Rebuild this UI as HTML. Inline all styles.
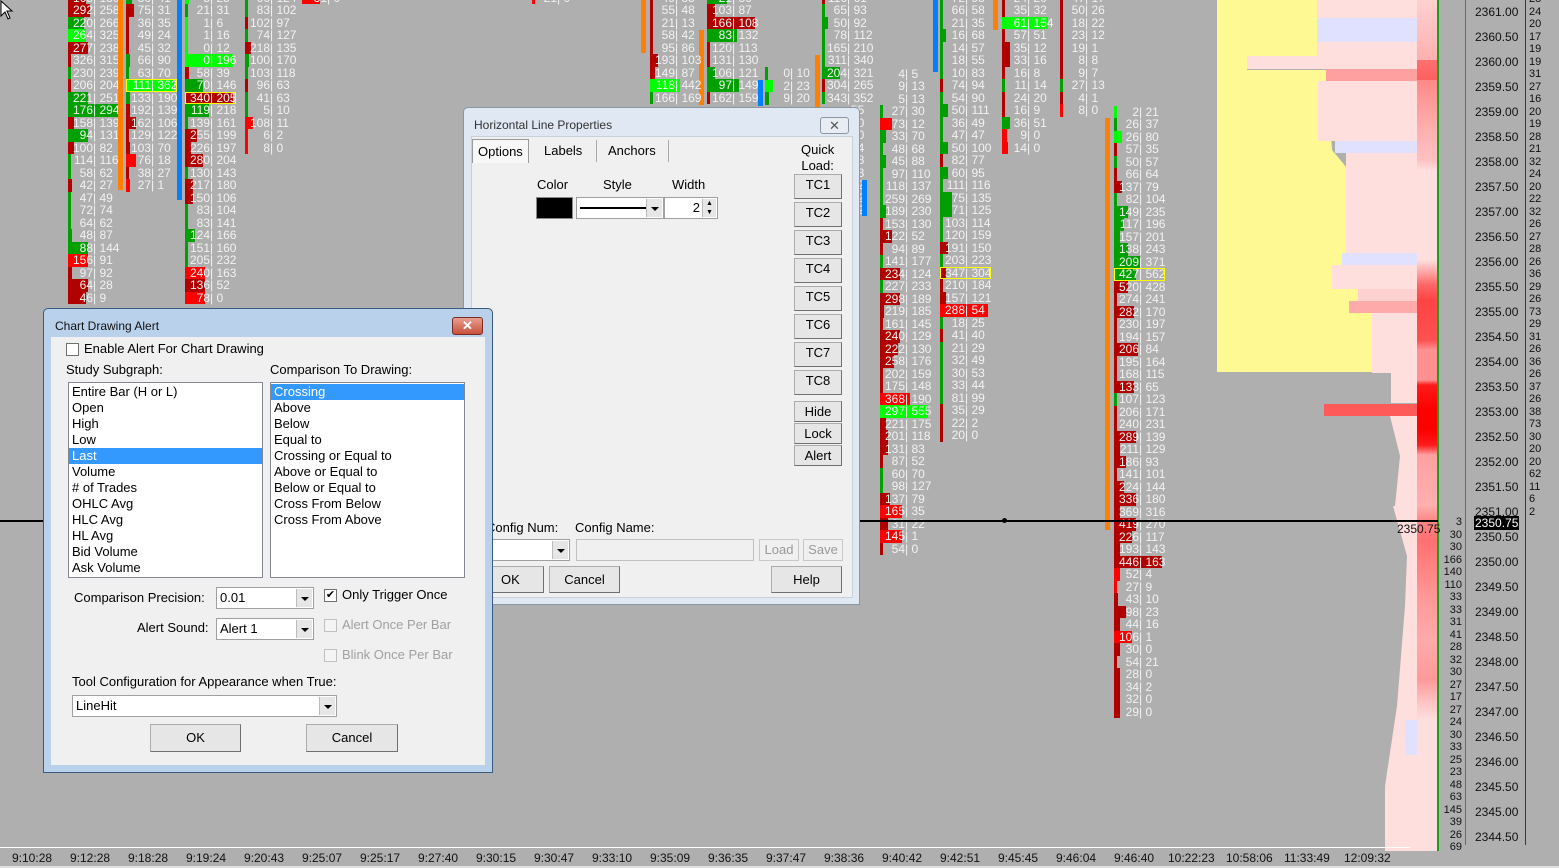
<!DOCTYPE html>
<html><head><meta charset="utf-8"><style>
*{margin:0;padding:0;box-sizing:border-box}
body{width:1559px;height:868px;background:#afafaf;position:relative;overflow:hidden;font-family:"Liberation Sans",sans-serif}
.c{position:absolute;font-size:12px;color:#f2f2f2;line-height:12.5px}
.c p{height:12.5px;padding-left:1px;white-space:pre}
.c s{display:inline-block;width:24px;text-align:right;text-decoration:none}
.g{background:linear-gradient(90deg,#00a000 var(--w,6px),transparent 0)}
.G{background:linear-gradient(90deg,#00ff00 var(--w,6px),transparent 0)}
.r{background:linear-gradient(90deg,#b00000 var(--w,6px),transparent 0)}
.R{background:linear-gradient(90deg,#ff0000 var(--w,6px),transparent 0)}
.y{outline:1px solid #ffff00;outline-offset:-1px}
.vb{position:absolute;width:5px}
.o{background:#ff8000}.b{background:#0080ff}
.t{position:absolute;top:851px;font-size:12px;color:#111}
.px{position:absolute;left:1475px;font-size:12px;color:#111}
.sn{position:absolute;left:1529px;font-size:11px;color:#111}
.cn{position:absolute;left:1438px;width:24px;text-align:right;font-size:11px;color:#111}
.dlg{position:absolute;font-size:13px;color:#000}
.ab{position:absolute}
.btn{position:absolute;background:#e6e6e6;border:1px solid #acacac;border-right-color:#707070;border-bottom-color:#707070;text-align:center;font-size:13px;line-height:20px}
.box{position:absolute;background:#fff;border:1px solid #a0a0a0}
.dd{position:absolute;right:1px;top:1px;bottom:1px;width:16px;background:#e6e6e6;border-left:1px solid #bbb}
.dd:after{content:"";position:absolute;left:4px;top:8px;border:4px solid transparent;border-top:4px solid #000;border-bottom:0}
.cb{position:absolute;width:13px;height:13px;border:1px solid #707070;background:#fff}
.li{height:16px;line-height:16px;padding-left:3px}
.sel{background:#3399ff;color:#fff}
</style></head><body>

<!-- footprint columns -->
<div class="c" style="left:68px;top:-8.5px">
<p class="r" style="--w:18px"><s>165</s>| 130</p><p class="r" style="--w:22px"><s>292</s>| 258</p><p class="g" style="--w:16px"><s>220</s>| 266</p><p class="G" style="--w:18px"><s>264</s>| 325</p><p class="r" style="--w:20px"><s>277</s>| 238</p><p class="r" style="--w:3px"><s>326</s>| 315</p><p class="g" style="--w:3px"><s>230</s>| 239</p><p class="r" style="--w:3px"><s>206</s>| 204</p><p class="g" style="--w:20px"><s>221</s>| 251</p><p class="g" style="--w:50px"><s>176</s>| 294</p><p class="r"><s>158</s>| 139</p><p class="g" style="--w:20px"><s>94</s>| 131</p><p class="r"><s>100</s>| 82</p><p class="g" style="--w:3px"><s>114</s>| 116</p><p class="g" style="--w:3px"><s>58</s>| 62</p><p class="r" style="--w:4px"><s>42</s>| 27</p><p class="g" style="--w:3px"><s>47</s>| 49</p><p class="g" style="--w:3px"><s>72</s>| 74</p><p class="g" style="--w:3px"><s>64</s>| 62</p><p class="g" style="--w:4px"><s>48</s>| 87</p><p class="g" style="--w:20px"><s>88</s>| 144</p><p class="R" style="--w:20px"><s>156</s>| 91</p><p class="r" style="--w:4px"><s>97</s>| 92</p><p class="r" style="--w:20px"><s>64</s>| 28</p><p class="r" style="--w:18px"><s>46</s>| 9</p>
</div>
<div class="vb o" style="left:118px;top:0;height:190px"></div>
<div class="c" style="left:126px;top:-8.5px">
<p class="g" style="--w:6px"><s>30</s>| 41</p><p class="r" style="--w:8px"><s>75</s>| 31</p><p class="r" style="--w:3px"><s>36</s>| 35</p><p class="r" style="--w:3px"><s>49</s>| 24</p><p class="r" style="--w:3px"><s>45</s>| 32</p><p class="g" style="--w:4px"><s>66</s>| 90</p><p class="g" style="--w:3px"><s>63</s>| 70</p><p class="G y" style="--w:48px"><s>111</s>| 362</p><p class="g" style="--w:4px"><s>133</s>| 190</p><p class="r" style="--w:4px"><s>192</s>| 139</p><p class="r" style="--w:10px"><s>162</s>| 106</p><p class="r" style="--w:3px"><s>129</s>| 122</p><p class="r" style="--w:4px"><s>103</s>| 70</p><p class="R" style="--w:10px"><s>76</s>| 18</p><p class="r" style="--w:3px"><s>38</s>| 27</p><p class="R" style="--w:4px"><s>27</s>| 1</p>
</div>
<div class="vb b" style="left:177px;top:0;height:200px"></div>
<div class="c" style="left:185px;top:-8.5px">
<p class="G" style="--w:4px"><s>5</s>| 25</p><p class="g" style="--w:3px"><s>21</s>| 31</p><p class="G" style="--w:3px"><s>1</s>| 6</p><p class="G" style="--w:3px"><s>1</s>| 16</p><p class="G" style="--w:3px"><s>0</s>| 12</p><p class="G" style="--w:48px"><s>0</s>| 196</p><p class="r" style="--w:4px"><s>58</s>| 39</p><p class="g" style="--w:18px"><s>70</s>| 146</p><p class="r y" style="--w:48px"><s>340</s>| 205</p><p class="g" style="--w:24px"><s>119</s>| 218</p><p class="g" style="--w:3px"><s>139</s>| 161</p><p class="r" style="--w:12px"><s>255</s>| 199</p><p class="r" style="--w:6px"><s>226</s>| 197</p><p class="r" style="--w:18px"><s>280</s>| 204</p><p class="g" style="--w:3px"><s>130</s>| 143</p><p class="r" style="--w:8px"><s>217</s>| 180</p><p class="r" style="--w:8px"><s>150</s>| 106</p><p class="g" style="--w:3px"><s>83</s>| 104</p><p class="g" style="--w:3px"><s>83</s>| 141</p><p class="g" style="--w:10px"><s>124</s>| 166</p><p class="g" style="--w:3px"><s>151</s>| 160</p><p class="g" style="--w:3px"><s>205</s>| 232</p><p class="R" style="--w:20px"><s>240</s>| 163</p><p class="r" style="--w:20px"><s>136</s>| 52</p><p class="R" style="--w:20px"><s>78</s>| 0</p>
</div>
<div class="c" style="left:245px;top:-8.5px">
<p class="g" style="--w:3px"><s>66</s>| 124</p><p class="g" style="--w:3px"><s>83</s>| 102</p><p class="r" style="--w:3px"><s>102</s>| 97</p><p class="g" style="--w:3px"><s>74</s>| 127</p><p class="r" style="--w:6px"><s>218</s>| 135</p><p class="g" style="--w:4px"><s>100</s>| 170</p><p class="g" style="--w:3px"><s>103</s>| 118</p><p class="r" style="--w:3px"><s>96</s>| 63</p><p class="g" style="--w:3px"><s>41</s>| 63</p><p class="g" style="--w:3px"><s>5</s>| 10</p><p class="R" style="--w:8px"><s>108</s>| 11</p><p class="R" style="--w:3px"><s>6</s>| 2</p><p class="R" style="--w:3px"><s>8</s>| 0</p>
</div>
<div class="c" style="left:302px;top:-8.5px"><p class="R" style="--w:18px"><s>31</s>| 0</p></div>
<div class="c" style="left:532px;top:-8.5px"><p class="R" style="--w:3px"><s>21</s>| 0</p></div>
<div class="vb o" style="left:641px;top:0;height:53px"></div>
<div class="vb o" style="left:699px;top:30px;height:75px"></div>
<div class="c" style="left:650px;top:-8.5px">
<p class="r" style="--w:3px"><s>49</s>| 35</p><p class="r" style="--w:3px"><s>55</s>| 48</p><p class="r" style="--w:3px"><s>21</s>| 13</p><p class="r" style="--w:3px"><s>58</s>| 42</p><p class="r" style="--w:3px"><s>95</s>| 86</p><p class="r" style="--w:8px"><s>193</s>| 103</p><p class="r" style="--w:5px"><s>149</s>| 87</p><p class="G" style="--w:30px"><s>118</s>| 442</p><p class="g" style="--w:3px"><s>166</s>| 169</p>
</div>
<div class="c" style="left:707px;top:-8.5px">
<p class="g" style="--w:20px"><s>21</s>| 36</p><p class="r" style="--w:8px"><s>103</s>| 87</p><p class="r" style="--w:48px"><s>166</s>| 108</p><p class="g" style="--w:30px"><s>83</s>| 132</p><p class="r" style="--w:3px"><s>120</s>| 113</p><p class="r" style="--w:3px"><s>131</s>| 130</p><p class="g" style="--w:8px"><s>106</s>| 121</p><p class="g" style="--w:32px"><s>97</s>| 149</p><p class="r" style="--w:3px"><s>162</s>| 159</p>
</div>
<div class="vb b" style="left:758px;top:80px;height:26px"></div>
<div class="c" style="left:765px;top:67px"><p class="g" style="--w:3px"><s>0</s>| 10</p><p class="G" style="--w:8px"><s>2</s>| 23</p><p class="g" style="--w:4px"><s>9</s>| 20</p></div>
<div class="vb o" style="left:815px;top:55px;height:55px"></div>
<div class="c" style="left:822px;top:-8.5px">
<p class="r" style="--w:3px"><s>116</s>| 61</p><p class="g" style="--w:3px"><s>65</s>| 93</p><p class="g" style="--w:6px"><s>50</s>| 92</p><p class="g" style="--w:3px"><s>78</s>| 112</p><p class="g" style="--w:3px"><s>165</s>| 210</p><p class="g" style="--w:3px"><s>311</s>| 340</p><p class="g" style="--w:18px"><s>204</s>| 321</p><p class="r" style="--w:3px"><s>304</s>| 265</p><p class="g" style="--w:3px"><s>343</s>| 352</p>
</div>
<div class="c" style="left:850px;top:104px">
<p>55</p><p class="R" style="--w:10px">90</p><p class="r" style="--w:10px">30</p><p>34</p><p>28</p><p>83</p><p>62</p><p>62</p><p>02</p><p>6</p><p>9</p><p>7</p><p>6</p><p>0</p><p>2</p>
</div>
<div class="vb b" style="left:933px;top:0;height:72px"></div>
<div class="vb b" style="left:862px;top:180px;height:36px"></div>
<div class="c" style="left:880px;top:67.5px">
<p><s>4</s>| 5</p><p><s>9</s>| 13</p><p><s>5</s>| 13</p><p class="g" style="--w:3px"><s>27</s>| 30</p><p class="R" style="--w:12px"><s>73</s>| 12</p><p class="g" style="--w:6px"><s>33</s>| 70</p><p class="g" style="--w:3px"><s>48</s>| 68</p><p class="g" style="--w:6px"><s>45</s>| 88</p><p class="g" style="--w:3px"><s>97</s>| 110</p><p class="g" style="--w:3px"><s>118</s>| 137</p><p class="g" style="--w:3px"><s>259</s>| 269</p><p class="g" style="--w:6px"><s>189</s>| 230</p><p class="r" style="--w:3px"><s>153</s>| 130</p><p class="r" style="--w:12px"><s>122</s>| 52</p><p class="r" style="--w:3px"><s>94</s>| 89</p><p class="g" style="--w:3px"><s>141</s>| 177</p><p class="r" style="--w:20px"><s>234</s>| 124</p><p class="g" style="--w:3px"><s>227</s>| 233</p><p class="r" style="--w:20px"><s>298</s>| 189</p><p class="r" style="--w:4px"><s>219</s>| 185</p><p class="r" style="--w:3px"><s>161</s>| 145</p><p class="r" style="--w:20px"><s>240</s>| 129</p><p class="r" style="--w:18px"><s>222</s>| 130</p><p class="r" style="--w:14px"><s>258</s>| 176</p><p class="r" style="--w:3px"><s>202</s>| 159</p><p class="r" style="--w:3px"><s>175</s>| 148</p><p class="R" style="--w:30px"><s>368</s>| 190</p><p class="G" style="--w:48px"><s>297</s>| 555</p><p class="r" style="--w:6px"><s>221</s>| 175</p><p class="r" style="--w:8px"><s>201</s>| 118</p><p class="r" style="--w:8px"><s>131</s>| 83</p><p class="r" style="--w:3px"><s>87</s>| 52</p><p class="g" style="--w:3px"><s>60</s>| 70</p><p class="g" style="--w:3px"><s>98</s>| 127</p><p class="r" style="--w:10px"><s>137</s>| 79</p><p class="R" style="--w:22px"><s>165</s>| 35</p><p class="r" style="--w:8px"><s>31</s>| 22</p><p class="R" style="--w:22px"><s>145</s>| 1</p><p class="r" style="--w:3px"><s>54</s>| 0</p>
</div>
<div class="c" style="left:940px;top:-8.5px">
<p class="g" style="--w:3px"><s>72</s>| 98</p><p class="g" style="--w:3px"><s>66</s>| 58</p><p class="g" style="--w:3px"><s>21</s>| 35</p><p class="g" style="--w:6px"><s>16</s>| 68</p><p class="g" style="--w:3px"><s>14</s>| 57</p><p class="g" style="--w:3px"><s>18</s>| 55</p><p class="g" style="--w:3px"><s>10</s>| 83</p><p class="r" style="--w:3px"><s>74</s>| 94</p><p class="g" style="--w:3px"><s>54</s>| 90</p><p class="g" style="--w:8px"><s>50</s>| 111</p><p class="g" style="--w:3px"><s>36</s>| 49</p><p class="g" style="--w:3px"><s>47</s>| 47</p><p class="g" style="--w:8px"><s>50</s>| 100</p><p class="r" style="--w:3px"><s>82</s>| 77</p><p class="g" style="--w:8px"><s>60</s>| 95</p><p class="g" style="--w:3px"><s>111</s>| 116</p><p class="g" style="--w:12px"><s>75</s>| 135</p><p class="g" style="--w:12px"><s>71</s>| 125</p><p class="g" style="--w:3px"><s>103</s>| 114</p><p class="g" style="--w:3px"><s>120</s>| 159</p><p class="r" style="--w:8px"><s>191</s>| 150</p><p class="g" style="--w:3px"><s>203</s>| 223</p><p class="r y" style="--w:6px"><s>347</s>| 304</p><p class="r" style="--w:3px"><s>210</s>| 184</p><p class="r" style="--w:6px"><s>157</s>| 121</p><p class="R" style="--w:48px"><s>288</s>| 54</p><p class="g" style="--w:3px"><s>18</s>| 25</p><p class="r" style="--w:3px"><s>41</s>| 40</p><p class="g" style="--w:3px"><s>21</s>| 29</p><p class="g" style="--w:3px"><s>32</s>| 49</p><p class="g" style="--w:3px"><s>30</s>| 53</p><p class="g" style="--w:3px"><s>33</s>| 44</p><p class="g" style="--w:3px"><s>81</s>| 99</p><p class="r" style="--w:3px"><s>35</s>| 29</p><p class="r" style="--w:3px"><s>22</s>| 2</p><p class="r" style="--w:3px"><s>20</s>| 0</p>
</div>
<div class="vb o" style="left:993px;top:0;height:30px"></div>
<div class="c" style="left:1002px;top:-8.5px">
<p class="r" style="--w:3px"><s>24</s>| 20</p><p class="r" style="--w:3px"><s>35</s>| 32</p><p class="G" style="--w:46px"><s>61</s>| 154</p><p class="r" style="--w:3px"><s>57</s>| 51</p><p class="r" style="--w:8px"><s>35</s>| 12</p><p class="r" style="--w:8px"><s>33</s>| 16</p><p class="r" style="--w:3px"><s>16</s>| 8</p><p class="g" style="--w:3px"><s>11</s>| 14</p><p class="r" style="--w:3px"><s>24</s>| 20</p><p class="r" style="--w:3px"><s>16</s>| 9</p><p class="g" style="--w:8px"><s>36</s>| 51</p><p class="R" style="--w:5px"><s>9</s>| 0</p><p class="R" style="--w:6px"><s>14</s>| 0</p>
</div>
<div class="c" style="left:1060px;top:-8.5px">
<p class="r" style="--w:3px"><s>47</s>| 17</p><p class="r" style="--w:3px"><s>50</s>| 26</p><p class="r" style="--w:3px"><s>18</s>| 22</p><p class="r" style="--w:3px"><s>23</s>| 12</p><p class="r" style="--w:3px"><s>19</s>| 1</p><p class="r" style="--w:3px"><s>8</s>| 8</p><p class="r" style="--w:3px"><s>9</s>| 7</p><p class="g" style="--w:3px"><s>27</s>| 13</p><p class="r" style="--w:3px"><s>4</s>| 1</p><p class="R" style="--w:3px"><s>8</s>| 0</p>
</div>
<div class="vb o" style="left:1105px;top:118px;height:412px"></div>
<div class="c" style="left:1114px;top:105.5px">
<p class="G" style="--w:3px"><s>2</s>| 21</p><p class="g" style="--w:3px"><s>26</s>| 37</p><p class="G" style="--w:8px"><s>26</s>| 80</p><p class="r" style="--w:3px"><s>57</s>| 35</p><p class="g" style="--w:3px"><s>50</s>| 57</p><p class="r" style="--w:3px"><s>66</s>| 64</p><p class="r" style="--w:8px"><s>137</s>| 79</p><p class="g" style="--w:3px"><s>82</s>| 104</p><p class="g" style="--w:14px"><s>149</s>| 235</p><p class="g" style="--w:10px"><s>117</s>| 196</p><p class="g" style="--w:6px"><s>157</s>| 201</p><p class="g" style="--w:14px"><s>138</s>| 243</p><p class="g" style="--w:26px"><s>209</s>| 371</p><p class="g y" style="--w:22px"><s>427</s>| 562</p><p class="r" style="--w:14px"><s>520</s>| 428</p><p class="r" style="--w:3px"><s>274</s>| 241</p><p class="r" style="--w:20px"><s>282</s>| 170</p><p class="r" style="--w:3px"><s>230</s>| 197</p><p class="r" style="--w:3px"><s>194</s>| 157</p><p class="r" style="--w:24px"><s>206</s>| 84</p><p class="r" style="--w:3px"><s>195</s>| 164</p><p class="r" style="--w:3px"><s>168</s>| 115</p><p class="r" style="--w:20px"><s>133</s>| 65</p><p class="g" style="--w:3px"><s>107</s>| 123</p><p class="r" style="--w:3px"><s>206</s>| 171</p><p class="r" style="--w:3px"><s>240</s>| 231</p><p class="r" style="--w:22px"><s>289</s>| 139</p><p class="r" style="--w:6px"><s>211</s>| 129</p><p class="r" style="--w:12px"><s>186</s>| 93</p><p class="r" style="--w:3px"><s>141</s>| 101</p><p class="r" style="--w:10px"><s>224</s>| 144</p><p class="r" style="--w:22px"><s>336</s>| 180</p><p class="r" style="--w:6px"><s>369</s>| 316</p><p class="r" style="--w:22px"><s>419</s>| 270</p><p class="r" style="--w:18px"><s>226</s>| 117</p><p class="r" style="--w:6px"><s>193</s>| 143</p><p class="r" style="--w:48px"><s>446</s>| 163</p><p class="R" style="--w:6px"><s>52</s>| 4</p><p class="R" style="--w:3px"><s>27</s>| 9</p><p class="r" style="--w:4px"><s>43</s>| 10</p><p class="r" style="--w:12px"><s>98</s>| 23</p><p class="r" style="--w:6px"><s>44</s>| 16</p><p class="R" style="--w:18px"><s>106</s>| 1</p><p class="r" style="--w:6px"><s>30</s>| 0</p><p class="r" style="--w:3px"><s>54</s>| 21</p><p class="r" style="--w:6px"><s>28</s>| 0</p><p class="r" style="--w:6px"><s>34</s>| 2</p><p class="r" style="--w:6px"><s>32</s>| 0</p><p class="r" style="--w:6px"><s>29</s>| 0</p>
</div>

<!-- right profile -->
<div class="ab" style="left:1217px;top:0;width:180px;height:372px;background:#fff994;clip-path:polygon(0 0,100px 0,100px 60px,30px 60px,30px 70px,110px 70px,115px 150px,140px 180px,155px 240px,140px 250px,170px 290px,175px 372px,0 372px)"></div>
<div class="ab" style="left:1317px;top:0;width:100px;height:60px;background:#ffdede"></div>
<div class="ab" style="left:1247px;top:56px;width:170px;height:13px;background:#ffdede"></div>
<div class="ab" style="left:1326px;top:69px;width:91px;height:12px;background:#ffa0a0"></div>
<div class="ab" style="left:1317px;top:18px;width:100px;height:24px;background:#e0e0ff"></div>
<div class="ab" style="left:1318px;top:81px;width:99px;height:60px;background:#ffdede"></div>
<div class="ab" style="left:1335px;top:141px;width:82px;height:12px;background:#e0e0ff"></div>
<div class="ab" style="left:1346px;top:153px;width:71px;height:100px;background:#ffdede"></div>
<div class="ab" style="left:1342px;top:253px;width:75px;height:12px;background:#e0e0ff"></div>
<div class="ab" style="left:1332px;top:265px;width:85px;height:24px;background:#ffdede"></div>
<div class="ab" style="left:1358px;top:289px;width:59px;height:12px;background:#ffd0d0"></div>
<div class="ab" style="left:1349px;top:301px;width:68px;height:12px;background:#ffaaaa"></div>
<div class="ab" style="left:1372px;top:313px;width:45px;height:60px;background:#ffdede"></div>
<div class="ab" style="left:1391px;top:373px;width:26px;height:30px;background:#ffdede"></div>
<div class="ab" style="left:1324px;top:404px;width:93px;height:12px;background:#ff5a5a"></div>
<div class="ab" style="left:1390px;top:416px;width:27px;height:90px;background:#ffdede;clip-path:polygon(0 0,100% 0,100% 100%,5px 100%,10px 40px,5px 20px)"></div>
<div class="ab" style="left:1385px;top:506px;width:32px;height:345px;background:#ffdede;clip-path:polygon(8px 0,100% 0,100% 100%,0 100%,0 280px,12px 200px,20px 100px,22px 50px)"></div>
<div class="ab" style="left:1405px;top:720px;width:12px;height:35px;background:#e0e0ff"></div>
<div class="ab" style="left:1417px;top:0;width:20px;height:851px;background:linear-gradient(#ffd0d0 0,#ffb0b0 60px,#ff7070 60px,#ff6060 80px,#ff8888 80px,#ffb0b0 130px,#ffc0c0 160px,#ffdede 170px,#ffdede 260px,#ffb0b0 270px,#ff6666 285px,#ff4444 300px,#ff5050 340px,#ff9090 350px,#ff9090 380px,#ff1a1a 385px,#ff0000 410px,#ff0000 430px,#ff1a1a 445px,#ffa0a0 455px,#ffb0b0 505px,#ff8888 520px,#ff7070 540px,#ff9999 600px,#ffaaaa 640px,#ff9999 680px,#ffc0c0 700px,#ffdede 720px,#ffdede 851px)"></div>
<div class="ab" style="left:1437px;top:0;width:2px;height:851px;background:#1aa01a"></div>
<div class="ab" style="left:1465px;top:0;width:1px;height:845px;background:#1aa01a"></div>
<div class="ab" style="left:1525px;top:0;width:1px;height:845px;background:#c00000"></div>

<!-- prices -->
<div class="px" style="top:5px">2361.00</div><div class="px" style="top:30px">2360.50</div><div class="px" style="top:55px">2360.00</div><div class="px" style="top:80px">2359.50</div><div class="px" style="top:105px">2359.00</div><div class="px" style="top:130px">2358.50</div><div class="px" style="top:155px">2358.00</div><div class="px" style="top:180px">2357.50</div><div class="px" style="top:205px">2357.00</div><div class="px" style="top:230px">2356.50</div><div class="px" style="top:255px">2356.00</div><div class="px" style="top:280px">2355.50</div><div class="px" style="top:305px">2355.00</div><div class="px" style="top:330px">2354.50</div><div class="px" style="top:355px">2354.00</div><div class="px" style="top:380px">2353.50</div><div class="px" style="top:405px">2353.00</div><div class="px" style="top:430px">2352.50</div><div class="px" style="top:455px">2352.00</div><div class="px" style="top:480px">2351.50</div><div class="px" style="top:505px">2351.00</div><div class="px" style="top:530px">2350.50</div><div class="px" style="top:555px">2350.00</div><div class="px" style="top:580px">2349.50</div><div class="px" style="top:605px">2349.00</div><div class="px" style="top:630px">2348.50</div><div class="px" style="top:655px">2348.00</div><div class="px" style="top:680px">2347.50</div><div class="px" style="top:705px">2347.00</div><div class="px" style="top:730px">2346.50</div><div class="px" style="top:755px">2346.00</div><div class="px" style="top:780px">2345.50</div><div class="px" style="top:805px">2345.00</div><div class="px" style="top:830px">2344.50</div>
<div class="px" style="top:516px;left:1474px;background:#000;color:#fff;padding:0 1px">2350.75</div>
<div class="ab" style="left:1397px;top:522px;font-size:12px;color:#111">2350.75</div>

<div class="sn" style="top:-7px;line-height:12.5px;white-space:pre">28
24
20
17
19
19
31
27
16
20
19
28
21
32
24
20
22
32
26
27
28
26
36
29
26
73
29
31
26
36
26
37
26
38
73
30
20
20
62
11
6
2</div>
<div class="cn" style="top:516px;line-height:12.5px;white-space:pre">3
30
30
166
140
110
33
33
31
41
28
32
30
27
17
27
24
30
33
25
23
48
63
145
39
26
69</div>

<!-- horizontal line -->
<div class="ab" style="left:0;top:520px;width:1438px;height:2px;background:#000"></div>
<div class="ab" style="left:1002px;top:518px;width:5px;height:5px;border-radius:50%;background:#000"></div>

<!-- time axis -->
<div class="ab" style="left:0;top:847px;width:1410px;height:1px;background:#fff"></div>
<div class="ab" style="left:0;top:866px;width:1559px;height:2px;background:#e0e0e0"></div>
<div class="t" style="left:12px">9:10:28</div><div class="t" style="left:70px">9:12:28</div><div class="t" style="left:128px">9:18:28</div><div class="t" style="left:186px">9:19:24</div><div class="t" style="left:244px">9:20:43</div><div class="t" style="left:302px">9:25:07</div><div class="t" style="left:360px">9:25:17</div><div class="t" style="left:418px">9:27:40</div><div class="t" style="left:476px">9:30:15</div><div class="t" style="left:534px">9:30:47</div><div class="t" style="left:592px">9:33:10</div><div class="t" style="left:650px">9:35:09</div><div class="t" style="left:708px">9:36:35</div><div class="t" style="left:766px">9:37:47</div><div class="t" style="left:824px">9:38:36</div><div class="t" style="left:882px">9:40:42</div><div class="t" style="left:940px">9:42:51</div><div class="t" style="left:998px">9:45:45</div><div class="t" style="left:1056px">9:46:04</div><div class="t" style="left:1114px">9:46:40</div><div class="t" style="left:1168px">10:22:23</div><div class="t" style="left:1226px">10:58:06</div><div class="t" style="left:1284px">11:33:49</div><div class="t" style="left:1344px">12:09:32</div>

<!-- Horizontal Line Properties dialog -->
<div class="dlg" style="left:463px;top:107px;width:397px;height:498px;background:#dfe8f3;border:1px solid #8a96a4;border-radius:5px 5px 0 0">
 <div class="ab" style="left:10px;top:10px;font-size:12px;color:#333">Horizontal Line Properties</div>
 <div class="ab" style="left:356px;top:9px;width:29px;height:17px;border:1px solid #8c96a2;border-radius:3px;background:#e8edf3;text-align:center;font-size:13px;line-height:15px;color:#555">✕</div>
 <div class="ab" style="left:7px;top:28px;width:382px;height:462px;background:#f0f0f0;border:1px solid #c8d0da">
  <div class="ab" style="left:0;top:2px;width:57px;height:24px;border:1px solid #999;border-bottom:none;background:#f7f7f7;padding:4px 5px;font-size:13px">Options</div>
  <div class="ab" style="left:60px;top:3px;width:65px;height:22px;border-right:1px solid #aaa;padding:3px 12px;font-size:13px">Labels</div>
  <div class="ab" style="left:127px;top:3px;width:70px;height:22px;border-right:1px solid #aaa;padding:3px 9px;font-size:13px">Anchors</div>
  <div class="ab" style="left:329px;top:5px;font-size:13px;line-height:16px;text-align:center">Quick<br>Load:</div>
  <div class="ab" style="left:65px;top:40px;font-size:13px">Color</div>
  <div class="ab" style="left:131px;top:40px;font-size:13px">Style</div>
  <div class="ab" style="left:200px;top:40px;font-size:13px">Width</div>
  <div class="ab" style="left:64px;top:60px;width:37px;height:22px;background:#000;border:1px solid #888"></div>
  <div class="box" style="left:104px;top:60px;width:88px;height:22px"><div class="ab" style="left:3px;top:9px;width:66px;height:2px;background:#000"></div><div class="dd"></div></div>
  <div class="box" style="left:192px;top:60px;width:54px;height:22px;text-align:right;padding-right:17px;font-size:13px;line-height:20px">2<div class="ab" style="right:1px;top:1px;width:14px;height:18px;background:#e6e6e6;border-left:1px solid #bbb;font-size:7px;line-height:9px;text-align:center">▲<br>▼</div></div>
  <div class="btn" style="left:322px;top:37px;width:48px;height:25px">TC1</div>
  <div class="btn" style="left:322px;top:65px;width:48px;height:25px">TC2</div>
  <div class="btn" style="left:322px;top:93px;width:48px;height:25px">TC3</div>
  <div class="btn" style="left:322px;top:121px;width:48px;height:25px">TC4</div>
  <div class="btn" style="left:322px;top:149px;width:48px;height:25px">TC5</div>
  <div class="btn" style="left:322px;top:177px;width:48px;height:25px">TC6</div>
  <div class="btn" style="left:322px;top:205px;width:48px;height:25px">TC7</div>
  <div class="btn" style="left:322px;top:233px;width:48px;height:25px">TC8</div>
  <div class="btn" style="left:322px;top:264px;width:48px;height:21px;line-height:19px">Hide</div>
  <div class="btn" style="left:322px;top:286px;width:48px;height:21px;line-height:19px">Lock</div>
  <div class="btn" style="left:322px;top:308px;width:48px;height:21px;line-height:19px">Alert</div>
  <div class="ab" style="left:14px;top:383px;font-size:13px">Config Num:</div>
  <div class="ab" style="left:103px;top:383px;font-size:13px">Config Name:</div>
  <div class="box" style="left:10px;top:402px;width:88px;height:22px"><div class="dd"></div></div>
  <div class="box" style="left:104px;top:402px;width:178px;height:22px;background:#f0f0f0;border-color:#c0c0c0"></div>
  <div class="btn" style="left:287px;top:402px;width:40px;height:22px;color:#999;background:#f0f0f0;border-color:#c8c8c8">Load</div>
  <div class="btn" style="left:331px;top:402px;width:40px;height:22px;color:#999;background:#f0f0f0;border-color:#c8c8c8">Save</div>
  <div class="btn" style="left:10px;top:429px;width:62px;height:27px;line-height:25px;font-size:13px;padding-left:18px;text-align:left">OK</div>
  <div class="btn" style="left:77px;top:429px;width:71px;height:27px;line-height:25px;font-size:13px">Cancel</div>
  <div class="btn" style="left:299px;top:429px;width:71px;height:27px;line-height:25px;font-size:13px">Help</div>
 </div>
</div>

<!-- Chart Drawing Alert dialog -->
<div class="dlg" style="left:43px;top:308px;width:450px;height:465px;background:#b9d1ea;border:1px solid #3a5a80;border-radius:5px 5px 0 0">
 <div class="ab" style="left:11px;top:10px;font-size:12px;color:#111">Chart Drawing Alert</div>
 <div class="ab" style="left:408px;top:8px;width:31px;height:18px;border:1px solid #7a2a20;border-radius:3px;background:linear-gradient(#e8a090,#c8503c);text-align:center;color:#fff;font-size:13px;line-height:16px;font-weight:bold">✕</div>
 <div class="ab" style="left:7px;top:28px;width:434px;height:428px;background:#f0f0f0">
  <div class="cb" style="left:15px;top:6px"></div>
  <div class="ab" style="left:33px;top:4px;font-size:13px">Enable Alert For Chart Drawing</div>
  <div class="ab" style="left:15px;top:25px;font-size:13px">Study Subgraph:</div>
  <div class="ab" style="left:219px;top:25px;font-size:13px">Comparison To Drawing:</div>
  <div class="box" style="left:17px;top:45px;width:195px;height:196px;border-color:#828790;font-size:13px;padding-top:1px">
   <div class="li">Entire Bar (H or L)</div><div class="li">Open</div><div class="li">High</div><div class="li">Low</div><div class="li sel">Last</div><div class="li">Volume</div><div class="li"># of Trades</div><div class="li">OHLC Avg</div><div class="li">HLC Avg</div><div class="li">HL Avg</div><div class="li">Bid Volume</div><div class="li">Ask Volume</div>
  </div>
  <div class="box" style="left:219px;top:45px;width:195px;height:196px;border-color:#828790;font-size:13px;padding-top:1px">
   <div class="li sel">Crossing</div><div class="li">Above</div><div class="li">Below</div><div class="li">Equal to</div><div class="li">Crossing or Equal to</div><div class="li">Above or Equal to</div><div class="li">Below or Equal to</div><div class="li">Cross From Below</div><div class="li">Cross From Above</div>
  </div>
  <div class="ab" style="left:23px;top:253px;font-size:13px">Comparison Precision:</div>
  <div class="box" style="left:165px;top:250px;width:98px;height:22px;font-size:13px;line-height:20px;padding-left:3px">0.01<div class="dd"></div></div>
  <div class="cb" style="left:273px;top:252px;font-size:11px;line-height:11px;text-align:center">✔</div>
  <div class="ab" style="left:291px;top:250px;font-size:13px">Only Trigger Once</div>
  <div class="ab" style="left:86px;top:283px;font-size:13px">Alert Sound:</div>
  <div class="box" style="left:165px;top:281px;width:98px;height:22px;font-size:13px;line-height:20px;padding-left:3px">Alert 1<div class="dd"></div></div>
  <div class="cb" style="left:273px;top:282px;border-color:#c0c0c0;background:#f4f4f4"></div>
  <div class="ab" style="left:291px;top:280px;font-size:13px;color:#a0a0a0">Alert Once Per Bar</div>
  <div class="cb" style="left:273px;top:312px;border-color:#c0c0c0;background:#f4f4f4"></div>
  <div class="ab" style="left:291px;top:310px;font-size:13px;color:#a0a0a0">Blink Once Per Bar</div>
  <div class="ab" style="left:21px;top:337px;font-size:13px">Tool Configuration for Appearance when True:</div>
  <div class="box" style="left:21px;top:358px;width:265px;height:22px;font-size:13px;line-height:20px;padding-left:3px">LineHit<div class="dd"></div></div>
  <div class="btn" style="left:99px;top:387px;width:91px;height:28px;line-height:26px;font-size:13px">OK</div>
  <div class="btn" style="left:255px;top:387px;width:92px;height:28px;line-height:26px;font-size:13px">Cancel</div>
 </div>
</div>
<svg class="ab" style="left:0;top:0" width="14" height="20"><path d="M1 1 L1 16 L5 12 L8 19 L10 18 L7 11 L12 11 Z" fill="#fff" stroke="#000" stroke-width="1"/></svg>
</body></html>
